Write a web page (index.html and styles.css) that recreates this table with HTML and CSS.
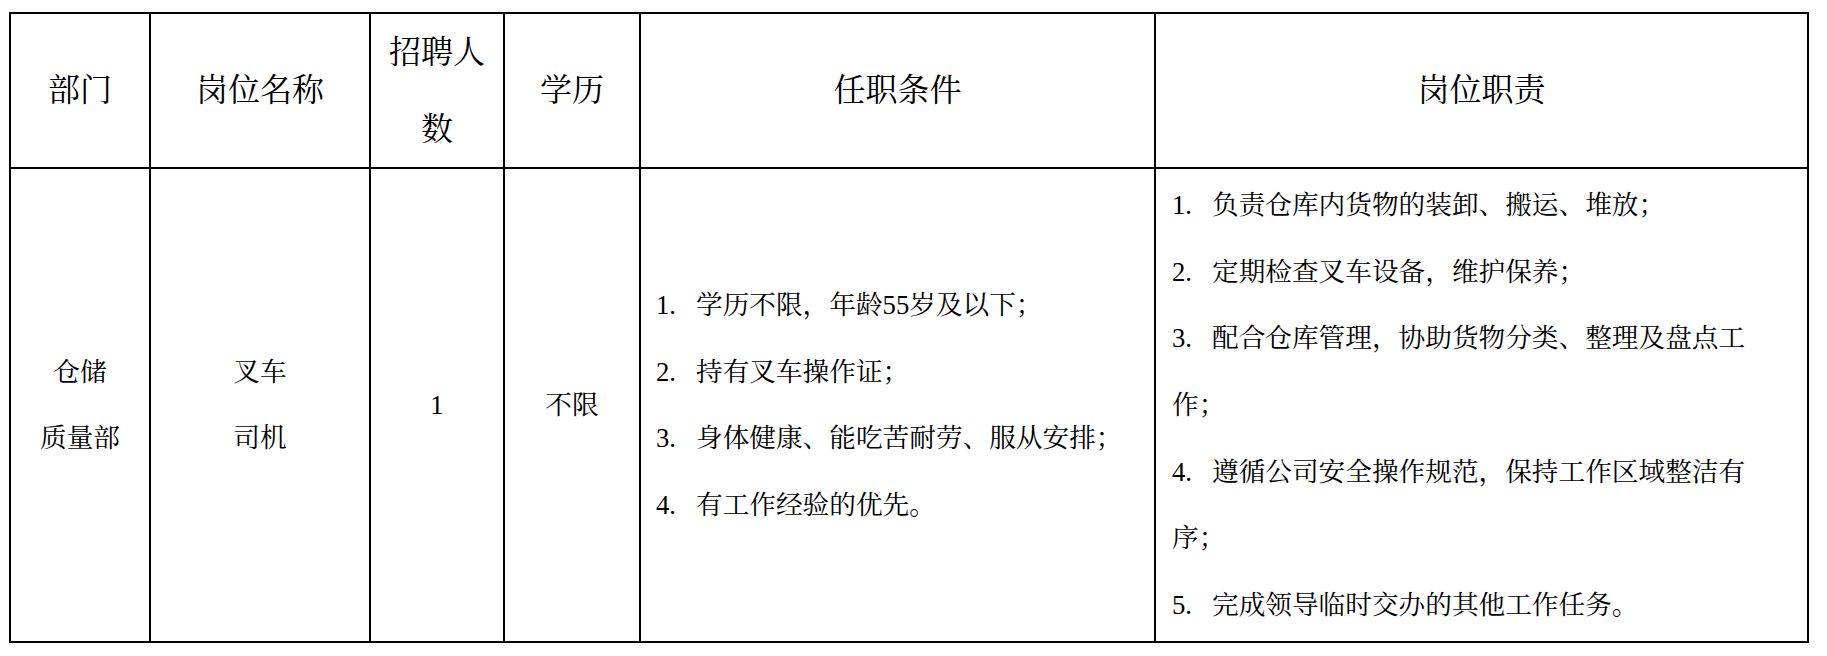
FILE: index.html
```html
<!DOCTYPE html>
<html lang="zh-CN">
<head>
<meta charset="utf-8">
<title>招聘岗位</title>
<link rel="stylesheet" href="styles.css">
</head>
<body>
<table class="jobs">
  <colgroup>
    <col class="c-dept">
    <col class="c-name">
    <col class="c-count">
    <col class="c-edu">
    <col class="c-req">
    <col class="c-duty">
  </colgroup>
  <thead>
    <tr class="head-row">
      <th>部门</th>
      <th>岗位名称</th>
      <th class="narrow">招聘人数</th>
      <th>学历</th>
      <th>任职条件</th>
      <th>岗位职责</th>
    </tr>
  </thead>
  <tbody>
    <tr class="body-row">
      <td class="center">仓储<br>质量部</td>
      <td class="center">叉车<br>司机</td>
      <td class="center">1</td>
      <td class="center">不限</td>
      <td class="list req">
        <div class="item"><span class="num">1.</span>学历不限，年龄55岁及以下；</div>
        <div class="item"><span class="num">2.</span>持有叉车操作证；</div>
        <div class="item"><span class="num">3.</span>身体健康、能吃苦耐劳、服从安排；</div>
        <div class="item"><span class="num">4.</span>有工作经验的优先。</div>
      </td>
      <td class="list duty">
        <div class="item"><span class="num">1.</span>负责仓库内货物的装卸、搬运、堆放；</div>
        <div class="item"><span class="num">2.</span>定期检查叉车设备，维护保养；</div>
        <div class="item"><span class="num">3.</span>配合仓库管理，协助货物分类、整理及盘点工作；</div>
        <div class="item"><span class="num">4.</span>遵循公司安全操作规范，保持工作区域整洁有序；</div>
        <div class="item"><span class="num">5.</span>完成领导临时交办的其他工作任务。</div>
      </td>
    </tr>
  </tbody>
</table>
</body>
</html>
```

FILE: styles.css
```css
html, body {
  background: #ffffff;
}

body {
  margin: 12px 0 0 9px;
  color: #000000;
  font-family: "Liberation Serif", "Noto Serif CJK SC", "Noto Sans CJK SC", serif;
}

.jobs {
  border-collapse: collapse;
  table-layout: fixed;
  width: 1798px;
}

.jobs th,
.jobs td {
  border: 2px solid #000000;
  padding: 0;
  vertical-align: middle;
}

.c-dept { width: 140px; }
.c-name { width: 220px; }
.c-count { width: 134px; }
.c-edu { width: 136px; }
.c-req { width: 515px; }
.c-duty { width: 653px; }

.head-row {
  height: 154px;
}

.head-row th {
  font-size: 32px;
  font-weight: normal;
  line-height: 76.7px;
  text-align: center;
}

.jobs .head-row th.narrow {
  padding: 0 8px;
}

.body-row {
  height: 474px;
}

.body-row td {
  font-size: 26.67px;
  line-height: 66.7px;
}

.center {
  text-align: center;
}

.list {
  text-align: left;
}

.jobs td.req {
  padding-left: 15px;
}

.jobs td.duty {
  padding-left: 16px;
  padding-right: 48px;
}

.num {
  display: inline-block;
  width: 40px;
}
```
